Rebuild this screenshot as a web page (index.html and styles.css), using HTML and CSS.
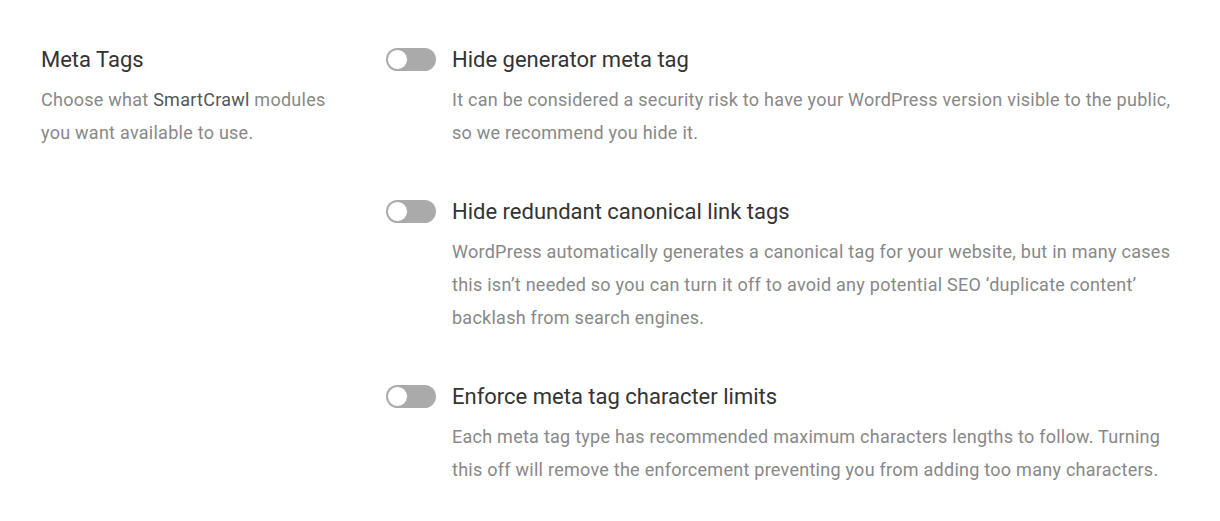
FILE: index.html
```html
<!DOCTYPE html>
<html>
<head>
<meta charset="utf-8">
<link rel="stylesheet" href="styles.css">
</head>
<body>
<div class="box-row">
  <div class="label-col">
    <h3 class="label-title">Meta Tags</h3>
    <p class="label-desc">Choose what <strong>SmartCrawl</strong> modules you want available to use.</p>
  </div>
  <div class="options-col">
    <div class="option">
      <span class="toggle"><span class="knob"></span></span>
      <div class="option-body">
        <h4 class="option-title">Hide generator meta tag</h4>
        <p class="option-desc">It can be considered a security risk to have your WordPress version visible to the public, so we recommend you hide it.</p>
      </div>
    </div>
    <div class="option">
      <span class="toggle"><span class="knob"></span></span>
      <div class="option-body">
        <h4 class="option-title">Hide redundant canonical link tags</h4>
        <p class="option-desc">WordPress automatically generates a canonical tag for your website, but in many cases this isn’t needed so you can turn it off to avoid any potential SEO ‘duplicate content’ backlash from search engines.</p>
      </div>
    </div>
    <div class="option">
      <span class="toggle"><span class="knob"></span></span>
      <div class="option-body">
        <h4 class="option-title">Enforce meta tag character limits</h4>
        <p class="option-desc">Each meta tag type has recommended maximum characters lengths to follow. Turning this off will remove the enforcement preventing you from adding too many characters.</p>
      </div>
    </div>
  </div>
</div>
</body>
</html>
```

FILE: styles.css
```css
* { box-sizing: border-box; }
html, body { margin: 0; padding: 0; background: #fff; }
body {
  font-family: Roboto, "Liberation Sans", sans-serif;
  -webkit-font-smoothing: antialiased;
}
.box-row {
  display: flex;
  padding: 45px 35px 0 41px;
}
.label-col {
  width: 345px;
  flex-shrink: 0;
  padding-right: 40px;
}
.label-title {
  margin: 0;
  font-size: 22px;
  line-height: 30px;
  font-weight: 400;
  color: #333;
}
.label-desc {
  margin: 8px 0 0;
  font-size: 18px;
  line-height: 33px;
  letter-spacing: 0.26px;
  color: #888;
}
.label-desc strong { font-weight: 400; color: #555; }
.options-col {
  flex: 1;
  display: flex;
  flex-direction: column;
  gap: 48px;
}
.option {
  display: flex;
  gap: 16px;
  align-items: flex-start;
}
.toggle {
  position: relative;
  flex-shrink: 0;
  width: 50px;
  height: 23px;
  margin-top: 3px;
  border-radius: 12px;
  background: #aaa;
}
.knob {
  position: absolute;
  left: 1px;
  top: 1px;
  width: 21px;
  height: 21px;
  border-radius: 50%;
  background: #fff;
  border: 1px solid #aaa;
}
.option-title {
  margin: 0;
  font-size: 22px;
  line-height: 30px;
  font-weight: 400;
  color: #333;
}
.option-desc {
  margin: 8px 0 0;
  font-size: 18px;
  line-height: 33px;
  letter-spacing: 0.26px;
  color: #888;
}
```
